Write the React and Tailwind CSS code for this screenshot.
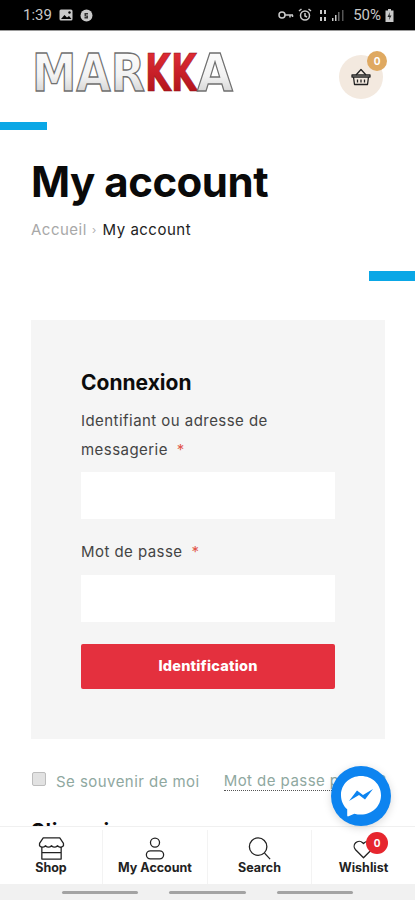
import React from 'react'

const FONT = "font-['Inter','Liberation_Sans',sans-serif]"

// ── Status bar ────────────────────────────────────────────────────────────────
function StatusBar() {
  return (
    <div className="h-[31px] shrink-0 bg-black border-b border-[#9a9a9a] flex items-center justify-between pl-[23px] pr-[21px] text-[#c9c9c9]">
      <div className="flex items-center gap-[7px]">
        <span className="text-[15px] leading-none font-['Roboto',sans-serif]">1:39</span>
        <svg width="14" height="12" viewBox="0 0 14 12" className="text-[#c9c9c9]">
          <rect x="0.5" y="0.5" width="13" height="11" rx="1.5" fill="currentColor" />
          <path d="M2 10l3.500-4 2.500 2.500 2-1.500 2.500 3z" fill="#000" />
          <circle cx="10.500" cy="3.500" r="1.200" fill="#000" />
        </svg>
        <svg width="13" height="13" viewBox="0 0 13 13">
          <circle cx="6.500" cy="6.500" r="6" fill="#c9c9c9" />
          <path d="M4.500 4h3.500v1.500H6v1h2v3H4.500V8h2v-.5h-2z" fill="#333" />
        </svg>
      </div>
      <div className="flex items-center gap-[4px]">
        <svg width="16" height="10" viewBox="0 0 16 10" fill="none" stroke="#c9c9c9" strokeWidth="1.500">
          <circle cx="4" cy="5" r="3" />
          <path d="M7 5h8M12 5v2.500M14.500 5v2" />
        </svg>
        <svg width="14" height="14" viewBox="0 0 14 14" fill="none" stroke="#c9c9c9" strokeWidth="1.500">
          <circle cx="7" cy="7.500" r="4.500" />
          <path d="M7 5v3l2 1M1 3l2.500-2M13 3l-2.500-2" />
        </svg>
        <svg width="26" height="13" viewBox="0 0 26 13" fill="#c9c9c9" className="ml-[3px]">
          <rect x="1" y="1" width="2" height="4" />
          <rect x="5" y="1" width="2" height="4" />
          <rect x="1" y="8" width="2" height="4" />
          <rect x="5" y="8" width="2" height="4" />
          <rect x="13" y="9" width="1.500" height="3" />
          <rect x="16" y="6" width="1.500" height="6" />
          <rect x="19" y="3" width="1.500" height="9" fill="#666" />
          <rect x="23" y="1" width="1.500" height="11" fill="#555" />
        </svg>
        <span className="ml-[4px] text-[15px] leading-none font-['Roboto',sans-serif]">50%</span>
        <svg width="9" height="13" viewBox="0 0 9 13">
          <path d="M3 0h3v1.500h2.500V13H.5V1.500H3z" fill="#c9c9c9" />
          <path d="M5 3L2.500 8h2L4 11l2.500-4.500h-2z" fill="#222" />
        </svg>
      </div>
    </div>
  )
}

// ── Logo ──────────────────────────────────────────────────────────────────────
function Logo() {
  return (
    <svg width="204" height="41" viewBox="0 0 204 41" className="overflow-visible">
      <defs>
        <linearGradient id="silver" x1="0" y1="0" x2="0" y2="1">
          <stop offset="0" stopColor="#ffffff" />
          <stop offset="0.55" stopColor="#f2f2f2" />
          <stop offset="1" stopColor="#c4c4c4" />
        </linearGradient>
        <linearGradient id="red" x1="0" y1="0" x2="0" y2="1">
          <stop offset="0" stopColor="#e8303a" />
          <stop offset="1" stopColor="#a80f16" />
        </linearGradient>
      </defs>
      <text y="38.500" fontFamily="'DejaVu Sans',sans-serif" fontWeight="700" fontSize="51">
        <tspan x="1" textLength="113" lengthAdjust="spacingAndGlyphs" fill="url(#silver)" stroke="#707070" strokeWidth="1.300">MAR</tspan>
        <tspan x="114" textLength="52" lengthAdjust="spacingAndGlyphs" fill="url(#red)" stroke="#8c1016" strokeWidth="0.600">KK</tspan>
        <tspan x="166" textLength="36" lengthAdjust="spacingAndGlyphs" fill="url(#silver)" stroke="#707070" strokeWidth="1.300">A</tspan>
      </text>
    </svg>
  )
}

function Basket() {
  return (
    <svg width="20" height="18" viewBox="0 0 20 18" fill="none" stroke="#222" strokeWidth="1.300" strokeLinejoin="round">
      <path d="M5 7l5-5.500L15 7" />
      <path d="M1 7h18v2H1zM2.500 9l1 7.500h13l1-7.500" />
      <path d="M6.500 11.500v3M10 11.500v3M13.500 11.500v3" />
    </svg>
  )
}

// ── Header ────────────────────────────────────────────────────────────────────
function Header() {
  return (
    <div className="h-[91px] shrink-0 flex items-start justify-between pl-[31px] pr-[32px] pt-[21px]">
      <Logo />
      <div className="relative mt-[3px] w-[44px] h-[44px] rounded-full bg-[#f3e9df] flex items-center justify-center">
        <Basket />
        <span className="absolute -top-[4px] -right-[4px] w-[20px] h-[20px] rounded-full bg-[#dfa961] text-white text-[10px] font-bold flex items-center justify-center">0</span>
      </div>
    </div>
  )
}

// ── Login card ────────────────────────────────────────────────────────────────
function Field({ children, className }) {
  return (
    <label className={`block ${className}`}>
      <span className="block text-[15px] tracking-[0.45px] leading-[28.500px] text-[#444]">
        {children}
        <span className="ml-[9px] text-[#e2574c]">*</span>
      </span>
      <span className="block h-[47px] mt-[8px] bg-white" />
    </label>
  )
}

function LoginCard() {
  return (
    <div className="ml-[31px] w-[354px] h-[419px] bg-[#f5f5f5] pl-[50px] pr-[50px] pt-[49px]">
      <h2 className="text-[21px] leading-[28px] font-bold text-[#0c0c0c]">Connexion</h2>
      <Field className="mt-[10px]">Identifiant ou adresse de messagerie</Field>
      <Field className="mt-[19px]">Mot de passe</Field>
      <div className="mt-[22px] h-[45px] rounded-[2px] bg-[#e4303e] text-white text-[14.500px] tracking-[0.2px] font-extrabold flex items-center justify-center">Identification</div>
    </div>
  )
}

// ── Bottom nav ────────────────────────────────────────────────────────────────
const NAV = [
  {
    label: 'Shop',
    icon: (
      <svg width="27" height="23" viewBox="0 0 28 25" fill="none" stroke="#222" strokeWidth="1.400" strokeLinejoin="round">
        <path d="M5 1h18l4 6v2.500c-2 2-4.500 2-6.500 0-2 2-4.500 2-6.500 0-2 2-4.500 2-6.500 0-2 2-4.500 2-6.500 0V7z" />
        <path d="M3.500 11v13h21V11M3.500 17h21" />
      </svg>
    ),
  },
  {
    label: 'My Account',
    icon: (
      <svg width="20" height="23" viewBox="0 0 22 25" fill="none" stroke="#222" strokeWidth="1.400">
        <circle cx="11" cy="6" r="5" />
        <rect x="1.500" y="15" width="19" height="9" rx="4.500" />
      </svg>
    ),
  },
  {
    label: 'Search',
    icon: (
      <svg width="23" height="23" viewBox="0 0 24 25" fill="none" stroke="#222" strokeWidth="1.400">
        <circle cx="10.500" cy="10.500" r="9.500" />
        <path d="M17.500 17.500l6 6.500" />
      </svg>
    ),
  },
]

function BottomNav() {
  return (
    <div className="h-[58px] shrink-0 bg-white border-t border-[#f0f0f0] grid grid-cols-[103px_105px_104px_1fr] pt-[3px] relative">
      {NAV.map(({ label, icon }) => (
        <div key={label} className="flex flex-col items-center border-r border-[#f3f3f3]">
          <div className="h-[23px] mt-[7px] flex items-end">{icon}</div>
          <span className="text-[12.500px] leading-[15px] font-bold text-[#222]">{label}</span>
        </div>
      ))}
      <div className="flex flex-col items-center">
        <div className="relative h-[23px] mt-[7px] flex items-start pt-[3px]">
          <svg width="21" height="19" viewBox="0 0 24 22" fill="none" stroke="#222" strokeWidth="1.500" strokeLinejoin="round">
            <path d="M12 20.500L2.800 11.300a5.800 5.800 0 0 1 8.200-8.200l1 1 1-1a5.800 5.800 0 0 1 8.200 8.200z" />
          </svg>
          <span className="absolute -top-[5px] -right-[14px] w-[22px] h-[22px] rounded-full bg-[#e6262e] text-white text-[10px] font-bold flex items-center justify-center">0</span>
        </div>
        <span className="text-[12.500px] leading-[15px] font-bold text-[#222]">Wishlist</span>
      </div>
    </div>
  )
}

function Messenger() {
  return (
    <div className="absolute left-[331px] top-[766px] w-[60px] h-[60px] rounded-full bg-[#0d84f0] flex items-center justify-center shadow-[0_2px_8px_rgba(0,0,0,0.15)]">
      <svg width="42" height="42" viewBox="0 0 42 42">
        <path d="M21 1C9.800 1 1 9.300 1 20.200c0 5.700 2.300 10.600 6.200 14v6.300c0 .7.700 1.100 1.300.8l5.900-2.600c2.100.6 4.300.9 6.600.9 11.200 0 20-8.300 20-19.300S32.200 1 21 1z" fill="#fff" />
        <path d="M9 26l8-10.500 6 4.500 10-6-8 10.500-6-4.500z" fill="#0d84f0" />
      </svg>
    </div>
  )
}

export default function App() {
  return (
    <div className={`relative w-[415px] h-[900px] overflow-hidden bg-white flex flex-col ${FONT}`}>
      <StatusBar />
      <Header />
      <div className="flex-1 min-h-0 overflow-hidden">
        <div className="w-[47px] h-[8px] bg-[#0aa7e6]" />
        <h1 className="ml-[31px] mt-[24px] text-[42px] leading-[56px] font-bold tracking-[-0.5px] text-[#0a0a0a]">My account</h1>
        <div className="ml-[31px] mt-[9px] flex items-center text-[15px] tracking-[0.5px] leading-[22px] text-[#222]">
          <span className="text-[#a8a8a8]">Accueil</span>
          <span className="ml-[5px] mr-[6px] text-[#b0b0b0] text-[11px]">›</span>
          My account
        </div>
        <div className="ml-auto mt-[30px] w-[46px] h-[10px] bg-[#0aa7e6]" />
        <div className="h-[39px]" />
        <LoginCard />
        <div className="mt-[33px] ml-[32px] flex items-center whitespace-nowrap text-[15px] tracking-[0.45px] leading-[18px] text-[#8fa89f]">
          <span className="w-[14px] h-[14px] -mt-[5px] mr-[10px] bg-[#e2e2e2] border border-[#bdbdbd] rounded-[2px]" />
          Se souvenir de moi
          <span className="ml-[24px] border-b border-dotted border-[#555]">Mot de passe perdu ?</span>
        </div>
        <div className="mt-[27px] ml-[31px] text-[21px] leading-[28px] font-bold text-[#0c0c0c]">S'inscrire</div>
      </div>
      <BottomNav />
      <div className="h-[16px] shrink-0 bg-[#f1f1f1] flex items-center justify-center gap-[31px]">
        <span className="w-[76px] h-[3px] rounded-full bg-[#a3a3a3]" />
        <span className="w-[77px] h-[3px] rounded-full bg-[#a3a3a3]" />
        <span className="w-[76px] h-[3px] rounded-full bg-[#a3a3a3]" />
      </div>
      <Messenger />
    </div>
  )
}
